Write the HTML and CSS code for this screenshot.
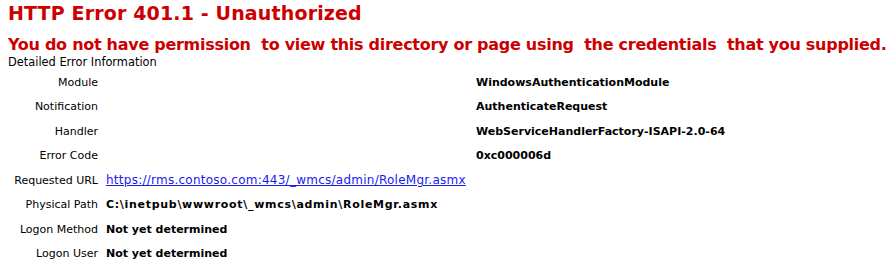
FILE: index.html
```html
<!DOCTYPE html>
<html>
<head>
<meta charset="utf-8">
<title>IIS 7.5 Detailed Error - 401.1 - Unauthorized</title>
<link rel="stylesheet" href="styles.css">
</head>
<body>
<h1 class="title">HTTP Error 401.1 - Unauthorized</h1>
<h2 class="subtitle">You do not have permission&nbsp; to view this directory or page using&nbsp; the credentials&nbsp; that you supplied.</h2>
<div class="detail-head">Detailed Error Information</div>
<div class="info info-wide">
  <div class="label">Module</div><div class="value">WindowsAuthenticationModule</div>
  <div class="label">Notification</div><div class="value">AuthenticateRequest</div>
  <div class="label">Handler</div><div class="value">WebServiceHandlerFactory-ISAPI-2.0-64</div>
  <div class="label">Error Code</div><div class="value">0xc000006d</div>
</div>
<div class="info info-narrow">
  <div class="label">Requested URL</div><div class="value"><a class="link" href="#">https://rms.contoso.com:443/_wmcs/admin/RoleMgr.asmx</a></div>
  <div class="label">Physical Path</div><div class="value path">C:\inetpub\wwwroot\_wmcs\admin\RoleMgr.asmx</div>
  <div class="label">Logon Method</div><div class="value">Not yet determined</div>
  <div class="label">Logon User</div><div class="value">Not yet determined</div>
</div>
</body>
</html>
```
FILE: styles.css
```css
html, body {
  background: #ffffff;
}
body {
  margin: 0;
  padding: 1px 8px 0 8px;
  font-family: "DejaVu Sans", Verdana, sans-serif;
  color: #000000;
}
.title {
  margin: 0;
  font-size: 19px;
  line-height: 24px;
  font-weight: bold;
  letter-spacing: 0.15px;
  color: #cc0000;
}
.subtitle {
  margin: 10px 0 0 0;
  font-size: 16px;
  line-height: 20px;
  font-weight: bold;
  letter-spacing: -0.28px;
  white-space: nowrap;
  color: #cc0000;
}
.detail-head {
  font-size: 11.4px;
  line-height: 15px;
}
.info {
  display: grid;
  grid-template-columns: 90px auto;
  grid-auto-rows: 24.5px;
  align-items: center;
  font-size: 11px;
  justify-content: start;
}
.info-wide {
  column-gap: 378px;
}
.info-narrow {
  column-gap: 8px;
}
.label {
  text-align: right;
  white-space: nowrap;
}
.value {
  font-weight: bold;
  white-space: nowrap;
}
.path {
  letter-spacing: 0.7px;
}
.link {
  font-weight: normal;
  font-size: 12px;
  letter-spacing: 0.25px;
  color: #1a1aee;
  text-decoration: underline;
}
```
